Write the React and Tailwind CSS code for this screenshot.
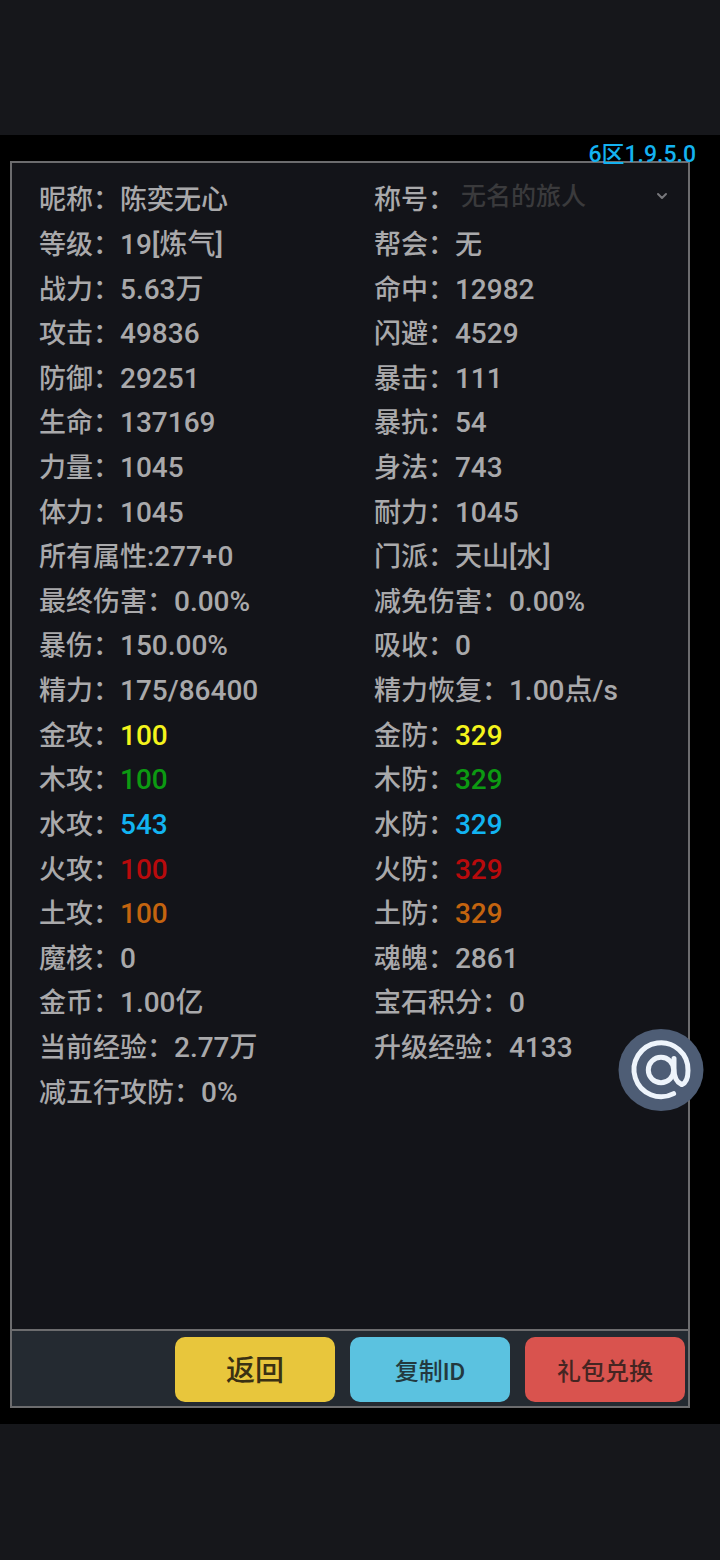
import { ChevronDown } from 'lucide-react'

const rows = [
  [{ label: '昵称：', value: '陈奕无心', size: 'text-[27px]' }, { label: '称号：', select: true }],
  [{ label: '等级：', value: '19[炼气]' }, { label: '帮会：', value: '无', size: 'text-[27px]' }],
  [{ label: '战力：', value: '5.63万' }, { label: '命中：', value: '12982' }],
  [{ label: '攻击：', value: '49836' }, { label: '闪避：', value: '4529' }],
  [{ label: '防御：', value: '29251' }, { label: '暴击：', value: '111' }],
  [{ label: '生命：', value: '137169' }, { label: '暴抗：', value: '54' }],
  [{ label: '力量：', value: '1045' }, { label: '身法：', value: '743' }],
  [{ label: '体力：', value: '1045' }, { label: '耐力：', value: '1045' }],
  [{ label: '所有属性:', value: '277+0' }, { label: '门派：', value: '天山[水]', size: 'text-[27px]' }],
  [{ label: '最终伤害：', value: '0.00%' }, { label: '减免伤害：', value: '0.00%' }],
  [{ label: '暴伤：', value: '150.00%' }, { label: '吸收：', value: '0' }],
  [{ label: '精力：', value: '175/86400' }, { label: '精力恢复：', value: '1.00点/s' }],
  [{ label: '金攻：', value: '100', color: 'text-[#f4f41c]' }, { label: '金防：', value: '329', color: 'text-[#f4f41c]' }],
  [{ label: '木攻：', value: '100', color: 'text-[#0c9a12]' }, { label: '木防：', value: '329', color: 'text-[#0c9a12]' }],
  [{ label: '水攻：', value: '543', color: 'text-[#12b4f2]' }, { label: '水防：', value: '329', color: 'text-[#12b4f2]' }],
  [{ label: '火攻：', value: '100', color: 'text-[#b80a0c]' }, { label: '火防：', value: '329', color: 'text-[#b80a0c]' }],
  [{ label: '土攻：', value: '100', color: 'text-[#c4640f]' }, { label: '土防：', value: '329', color: 'text-[#c4640f]' }],
  [{ label: '魔核：', value: '0' }, { label: '魂魄：', value: '2861' }],
  [{ label: '金币：', value: '1.00亿' }, { label: '宝石积分：', value: '0' }],
  [{ label: '当前经验：', value: '2.77万' }, { label: '升级经验：', value: '4133' }],
  [{ label: '减五行攻防：', value: '0%' }],
]

const actions = [
  { text: '返回', style: 'bg-[#e8c63c] text-[#3a3013] text-[29px]' },
  { text: '复制ID', style: 'bg-[#5bc2e0] text-[#23393f] text-2xl' },
  { text: '礼包兑换', style: 'bg-[#d9534e] text-[#452522] text-2xl' },
]

function Stat({ item }) {
  if (item.select) {
    return (
      <div className="flex items-center">
        <label htmlFor="title">{item.label}</label>
        <div className="relative grow mr-3 mb-2">
          <select
            id="title"
            className="w-full appearance-none bg-transparent pl-1.5 text-[25px] leading-8 text-[#3a3a3c] outline-none"
          >
            <option>无名的旅人</option>
          </select>
          <ChevronDown className="absolute right-1.5 top-2 size-4 text-[#77777b] pointer-events-none" strokeWidth={3} />
        </div>
      </div>
    )
  }
  return (
    <div className="flex items-center whitespace-nowrap">
      <span>{item.label}</span>
      <span className={`${item.size || 'text-[28px]'} ${item.color || ''}`}>{item.value}</span>
    </div>
  )
}

function MentionButton() {
  return (
    <button type="button" aria-label="@" className="absolute right-4 top-[1029px]">
      <svg width="86" height="82" viewBox="0 0 86 82" fill="none">
        <ellipse cx="43" cy="41" rx="42.5" ry="41" fill="#4e5d75" />
        <g stroke="#eef4fb" strokeWidth="5" strokeLinecap="round" strokeLinejoin="round">
          <circle cx="43" cy="41" r="12.7" />
          <path d="M55.6 64.6A27 27 0 1 1 70 41.5C70 48.5 68 54 63.8 55.6C58.8 53.5 56 48 56 40V29.5" />
        </g>
      </svg>
    </button>
  )
}

export default function App() {
  return (
    <div className="relative min-h-screen flex flex-col bg-[#16171b] pt-[135px] pb-[136px] font-['Roboto','Noto_Sans_CJK_SC',sans-serif] font-medium">
      <main className="relative grow flex flex-col bg-black pt-[26px] pr-[30px] pb-4 pl-[10px]">
        <p className="absolute right-6 top-1 text-[23px] leading-8 text-[#14b2f0]">6区1.9.5.0</p>
        <section className="grow flex flex-col border-2 border-[#6c6c6e] bg-[#131419]">
          <div className="grow grid auto-rows-fr pt-[15px] pb-[214px] pl-[27px] text-[27px] leading-8 text-[#a9a9ab]">
            {rows.map(([left, right]) => (
              <div key={left.label} className="grid grid-cols-[16fr_15fr]">
                <Stat item={left} />
                {right && <Stat item={right} />}
              </div>
            ))}
          </div>
          <footer className="flex justify-end gap-[15px] border-t-2 border-[#6c6c6e] bg-[#242a31] pt-1.5 pr-[3px] pb-1">
            {actions.map(action => (
              <button key={action.text} type="button" className={`w-40 h-[65px] pt-1 rounded-[10px] ${action.style}`}>
                {action.text}
              </button>
            ))}
          </footer>
        </section>
      </main>
      <MentionButton />
    </div>
  )
}
